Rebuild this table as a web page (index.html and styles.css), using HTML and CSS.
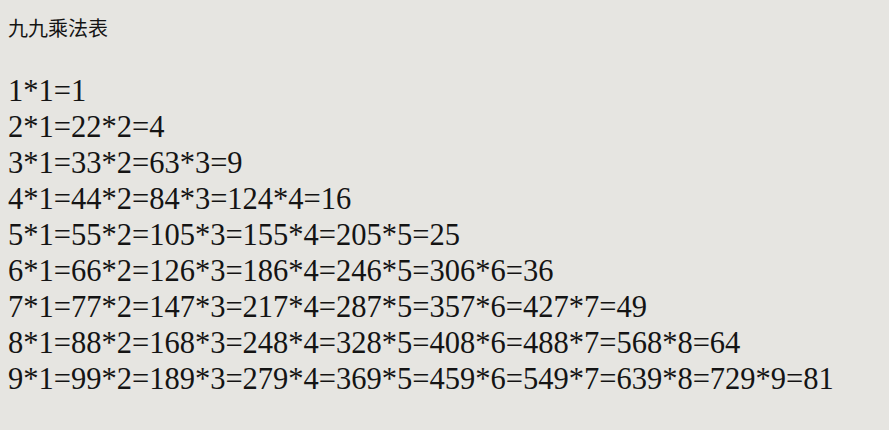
FILE: index.html
```html
<!DOCTYPE html>
<html lang="zh">
<head>
<meta charset="utf-8">
<title>九九乘法表</title>
<link rel="stylesheet" href="styles.css">
</head>
<body>
<div class="title">九九乘法表</div>
<div class="table">
<div class="row">1*1=1</div>
<div class="row">2*1=22*2=4</div>
<div class="row">3*1=33*2=63*3=9</div>
<div class="row">4*1=44*2=84*3=124*4=16</div>
<div class="row">5*1=55*2=105*3=155*4=205*5=25</div>
<div class="row">6*1=66*2=126*3=186*4=246*5=306*6=36</div>
<div class="row">7*1=77*2=147*3=217*4=287*5=357*6=427*7=49</div>
<div class="row">8*1=88*2=168*3=248*4=328*5=408*6=488*7=568*8=64</div>
<div class="row">9*1=99*2=189*3=279*4=369*5=459*6=549*7=639*8=729*9=81</div>
</div>
</body>
</html>
```
FILE: styles.css
```css
html, body {
  background: #e6e5e1;
}
body {
  margin: 8px;
  color: #141414;
}
.title {
  font-family: "Noto Sans CJK SC", sans-serif;
  font-size: 20px;
  line-height: 24px;
  padding-top: 8px;
}
.table {
  margin-top: 33px;
  font-family: "Liberation Serif", serif;
  font-size: 30.5px;
}
.row {
  line-height: 36px;
  white-space: nowrap;
}
```
